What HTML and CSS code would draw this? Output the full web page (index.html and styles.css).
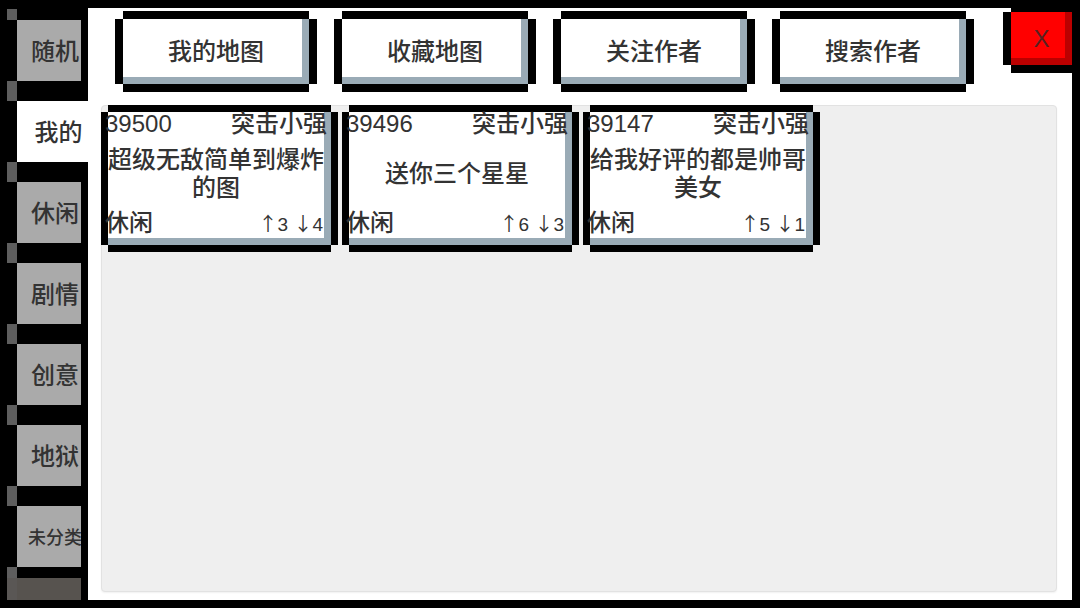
FILE: index.html
```html
<!DOCTYPE html>
<html lang="zh-CN">
<head>
    <meta charset="UTF-8">
    <meta name="viewport" content="width=device-width, initial-scale=1.0">
    <title>地图列表</title>
    <link rel="stylesheet" href="styles.css">
</head>
<body>
    <div class="app">
        <nav class="sidebar">
            <div class="side-item">随机</div>
            <div class="side-item active">我的</div>
            <div class="side-item">休闲</div>
            <div class="side-item">剧情</div>
            <div class="side-item">创意</div>
            <div class="side-item">地狱</div>
            <div class="side-item small">未分类</div>
            <div class="side-item dim"></div>
        </nav>

        <main class="panel">
            <div class="topbar">
                <div class="tabs">
                    <button class="tab">我的地图</button>
                    <button class="tab">收藏地图</button>
                    <button class="tab">关注作者</button>
                    <button class="tab">搜索作者</button>
                </div>
                <button class="close">X</button>
            </div>

            <section class="maps">
                <div class="card">
                    <div class="card-body">
                        <div class="card-head"><span class="num">39500</span><span>突击小强</span></div>
                        <div class="card-title">超级无敌简单到爆炸的图</div>
                        <div class="card-foot">
                            <span>休闲</span>
                            <span class="votes"><i>↑</i>3 <i>↓</i>4</span>
                        </div>
                    </div>
                </div>
                <div class="card">
                    <div class="card-body">
                        <div class="card-head"><span class="num">39496</span><span>突击小强</span></div>
                        <div class="card-title">送你三个星星</div>
                        <div class="card-foot">
                            <span>休闲</span>
                            <span class="votes"><i>↑</i>6 <i>↓</i>3</span>
                        </div>
                    </div>
                </div>
                <div class="card">
                    <div class="card-body">
                        <div class="card-head"><span class="num">39147</span><span>突击小强</span></div>
                        <div class="card-title">给我好评的都是帅哥美女</div>
                        <div class="card-foot">
                            <span>休闲</span>
                            <span class="votes"><i>↑</i>5 <i>↓</i>1</span>
                        </div>
                    </div>
                </div>
            </section>
        </main>
    </div>
</body>
</html>
```

FILE: styles.css
```css
* {
    box-sizing: border-box;
    margin: 0;
    padding: 0;
}

body {
    width: 1080px;
    height: 608px;
    overflow: hidden;
    background: #000;
    color: #333;
    font-family: "Liberation Sans", "Noto Sans CJK SC", sans-serif;
    font-weight: 500;
}

button {
    font: inherit;
    color: inherit;
    border: none;
    background: none;
    cursor: pointer;
}

.app {
    display: flex;
    height: 608px;
}

/* left category list, dark notches sit in the gaps between buttons */
.sidebar {
    width: 88px;
    flex: none;
    margin: 9px 0 8px;
    padding: 11px 0 0 17px;
    overflow: hidden;
    display: flex;
    flex-direction: column;
    background: #000 repeating-linear-gradient(#5e5e5e 0 20px, transparent 20px 81px) 7px -9px / 10px 100% no-repeat;
}

.side-item {
    width: 64px;
    height: 61px;
    flex: none;
    margin-bottom: 20px;
    padding: 0 0 2px 12px;
    display: flex;
    align-items: center;
    justify-content: center;
    overflow: hidden;
    white-space: nowrap;
    background: #aaa;
    font-size: 24px;
}

.side-item.active {
    width: 71px;
    background: #fff;
}

.side-item.small {
    font-size: 18px;
    margin-bottom: 11px;
}

.side-item.dim {
    background: #57534f;
    box-shadow: -10px 0 0 #5a5755;
}

.panel {
    flex: 1;
    margin: 8px 8px 8px 0;
    background: #fff;
    display: flex;
    flex-direction: column;
}

.topbar {
    display: flex;
    align-items: flex-start;
    padding: 4px 0 0 35px;
}

.tabs {
    display: flex;
    gap: 33px;
    margin-top: 7px;
}

/* pixel buttons: bars on each side, corners left open */
.tab {
    width: 186px;
    height: 65px;
    padding-bottom: 4px;
    background: #fff;
    font-size: 24px;
    box-shadow: inset -7px -7px 0 #9aabb6,
        -8px 0 0 #000, 8px 0 0 #000,
        0 -8px 0 #000, 0 8px 0 #000;
}

.close {
    width: 61px;
    height: 53px;
    margin-left: auto;
    background: #ff0000;
    color: #552222;
    font-size: 24px;
    font-weight: 400;
    box-shadow: inset -7px -7px 0 #bb0000,
        -8px 0 0 #000, 0 8px 0 #000, 0 -4px 0 #000;
}

.maps {
    flex: 1;
    margin: 21px 15px 8px 13px;
    padding: 6px;
    display: flex;
    flex-wrap: wrap;
    align-content: flex-start;
    gap: 18px 18px;
    background: #efefef;
    border: 1px solid #e2e2e2;
    border-radius: 4px;
    box-shadow: 0 1px 2px rgba(0, 0, 0, 0.06);
}

.card {
    width: 223px;
    height: 133px;
    background: #fff;
    box-shadow: inset -7px -7px 0 #9aabb6,
        -7px 0 0 #000, 7px 0 0 #000,
        0 -7px 0 #000, 0 7px 0 #000;
}

.card-body {
    height: 100%;
    margin: 0 4px 0 -3px;
    padding-bottom: 8px;
    display: flex;
    flex-direction: column;
    font-size: 24px;
}

.card-head,
.card-foot {
    display: flex;
    justify-content: space-between;
    align-items: baseline;
    line-height: 24px;
    white-space: nowrap;
}

.card-title {
    flex: 1;
    display: flex;
    align-items: center;
    justify-content: center;
    text-align: center;
    line-height: 28px;
}

.num {
    font-weight: 400;
}

.votes {
    margin-right: 4px;
    font-size: 19px;
    font-weight: 400;
}

.votes i {
    font-style: normal;
    font-family: "Noto Sans CJK SC", sans-serif;
    color: #333;
}
```
